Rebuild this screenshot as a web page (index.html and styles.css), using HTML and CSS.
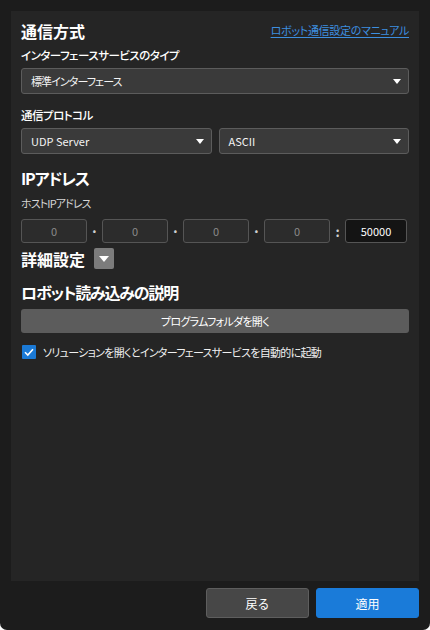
FILE: index.html
```html
<!DOCTYPE html>
<html lang="ja">
<head>
<meta charset="utf-8">
<link rel="stylesheet" href="styles.css">
</head>
<body>
<div class="window">
  <div class="panel">
    <div class="head-row">
      <h1 class="title">通信方式</h1>
      <a class="manual-link" href="#">ロボット通信設定のマニュアル</a>
    </div>
    <div class="label label-bold gap-s">インターフェースサービスのタイプ</div>
    <div class="select gap-xs"><span>標準インターフェース</span><span class="caret"></span></div>

    <div class="label label-bold gap-m">通信プロトコル</div>
    <div class="select-row gap-xs">
      <div class="select latin"><span>UDP Server</span><span class="caret"></span></div>
      <div class="select latin"><span>ASCII</span><span class="caret"></span></div>
    </div>

    <h2 class="section gap-m">IPアドレス</h2>
    <div class="label label-light gap-xs">ホストIPアドレス</div>
    <div class="ip-row">
      <div class="ip-box">0</div><span class="sep">·</span>
      <div class="ip-box">0</div><span class="sep">·</span>
      <div class="ip-box">0</div><span class="sep">·</span>
      <div class="ip-box">0</div><span class="sep colon">:</span>
      <div class="port-box">50000</div>
    </div>

    <div class="adv-row">
      <h2 class="section kanji">詳細設定</h2>
      <span class="expand-btn"><span class="expand-caret"></span></span>
    </div>

    <h2 class="section desc-title">ロボット読み込みの説明</h2>
    <div class="wide-btn">プログラムフォルダを開く</div>

    <label class="check-row">
      <span class="checkbox">
        <svg width="14" height="14" viewBox="0 0 14 14"><path d="M3 7.2 L5.8 10 L11 4.2" fill="none" stroke="#fff" stroke-width="1.6"/></svg>
      </span>
      <span class="check-text">ソリューションを開くとインターフェースサービスを自動的に起動</span>
    </label>
  </div>
  <div class="footer">
    <button class="btn btn-back">戻る</button>
    <button class="btn btn-apply">適用</button>
  </div>
</div>
</body>
</html>
```

FILE: styles.css
```css
* { box-sizing: border-box; }
html, body {
  margin: 0;
  padding: 0;
  background: #ffffff;
}
body {
  font-family: "Noto Sans CJK JP", "Noto Sans", sans-serif;
  font-feature-settings: "palt";
  color: #f2f2f2;
  font-size: 11px;
  letter-spacing: -0.6px;
}
.window {
  width: 430px;
  height: 630px;
  background: #1c1c1c;
  border-radius: 0 0 7px 7px;
  padding: 11px 11px 0 11px;
  display: flex;
  flex-direction: column;
}
.panel {
  height: 570px;
  background: #252525;
  padding: 8px 10px 0 10px;
  display: flex;
  flex-direction: column;
}
.head-row {
  display: flex;
  justify-content: space-between;
  align-items: center;
  height: 24px;
}
.title, .section {
  margin: 0;
  font-size: 16px;
  font-weight: 700;
  line-height: 24px;
  color: #ffffff;
  letter-spacing: -1.2px;
}
.title, .section.kanji { letter-spacing: 0; }
.manual-link {
  color: #3d8fe0;
  font-size: 11px;
  letter-spacing: -0.3px;
  text-decoration: underline;
  text-underline-offset: 2px;
  margin-top: -2px;
}
.label {
  font-size: 11px;
  line-height: 18px;
}
.label-bold { font-size: 11.5px; font-weight: 500; color: #ffffff; letter-spacing: -0.5px; }
.label-light { color: #d6d6d6; letter-spacing: -0.9px; }
.gap-s { margin-top: 3px; }
.gap-xs { margin-top: 4px; }
.gap-m { margin-top: 12px; }
.select {
  height: 26px;
  background: #3a3a3a;
  border: 1px solid #5c5c5c;
  border-radius: 3px;
  display: flex;
  align-items: center;
  justify-content: space-between;
  padding: 0 7px 0 9px;
  color: #f4f4f4;
  font-size: 11px;
  letter-spacing: -0.9px;
}
.select.latin { letter-spacing: 0; }
.caret {
  width: 0;
  height: 0;
  border-left: 4.5px solid transparent;
  border-right: 4.5px solid transparent;
  border-top: 5px solid #ffffff;
}
.select-row {
  display: grid;
  grid-template-columns: 1fr 1fr;
  gap: 7px;
}
.ip-row {
  margin-top: 7px;
  display: flex;
  align-items: center;
  height: 24px;
}
.ip-box, .port-box {
  height: 24px;
  border: 1px solid #555555;
  border-radius: 3px;
  display: flex;
  align-items: center;
  justify-content: center;
  font-size: 11px;
  letter-spacing: 0;
}
.ip-box {
  width: 66px;
  background: #2c2c2c;
  color: #8a8a8a;
}
.port-box {
  width: 62px;
  background: #141414;
  color: #ffffff;
}
.sep {
  width: 15px;
  text-align: center;
  color: #cfcfcf;
  font-size: 14px;
  font-weight: 700;
  letter-spacing: 0;
}
.sep.colon { font-size: 13px; }
.adv-row {
  margin-top: 5px;
  display: flex;
  align-items: center;
  gap: 9px;
  height: 21px;
}
.expand-btn {
  width: 20px;
  height: 21px;
  background: #7c7c7c;
  border-radius: 2px;
  display: flex;
  align-items: center;
  justify-content: center;
}
.expand-caret {
  width: 0;
  height: 0;
  border-left: 5px solid transparent;
  border-right: 5px solid transparent;
  border-top: 6px solid #ffffff;
}
.desc-title { margin-top: 11px; }
.wide-btn {
  margin-top: 5px;
  height: 24px;
  background: #5c5c5c;
  border-radius: 3px;
  display: flex;
  align-items: center;
  justify-content: center;
  color: #ffffff;
  font-size: 11px;
  letter-spacing: -0.7px;
}
.check-row {
  margin-top: 10px;
  display: flex;
  align-items: center;
  gap: 7px;
  height: 18px;
  padding-left: 1px;
}
.checkbox {
  width: 14px;
  height: 14px;
  background: #1b7ad6;
  border-radius: 1px;
  display: flex;
}
.check-text { color: #f0f0f0; font-size: 11px; letter-spacing: -0.7px; }
.footer {
  display: flex;
  justify-content: flex-end;
  gap: 7px;
  padding-top: 7px;
}
.btn {
  width: 103px;
  height: 30px;
  border-radius: 3px;
  font-family: inherit;
  font-size: 12px;
  color: #ffffff;
  cursor: pointer;
}
.btn-back {
  background: #474747;
  border: 1px solid #5e5e5e;
}
.btn-apply {
  background: #1a7bd9;
  border: 1px solid #1a7bd9;
}
```
